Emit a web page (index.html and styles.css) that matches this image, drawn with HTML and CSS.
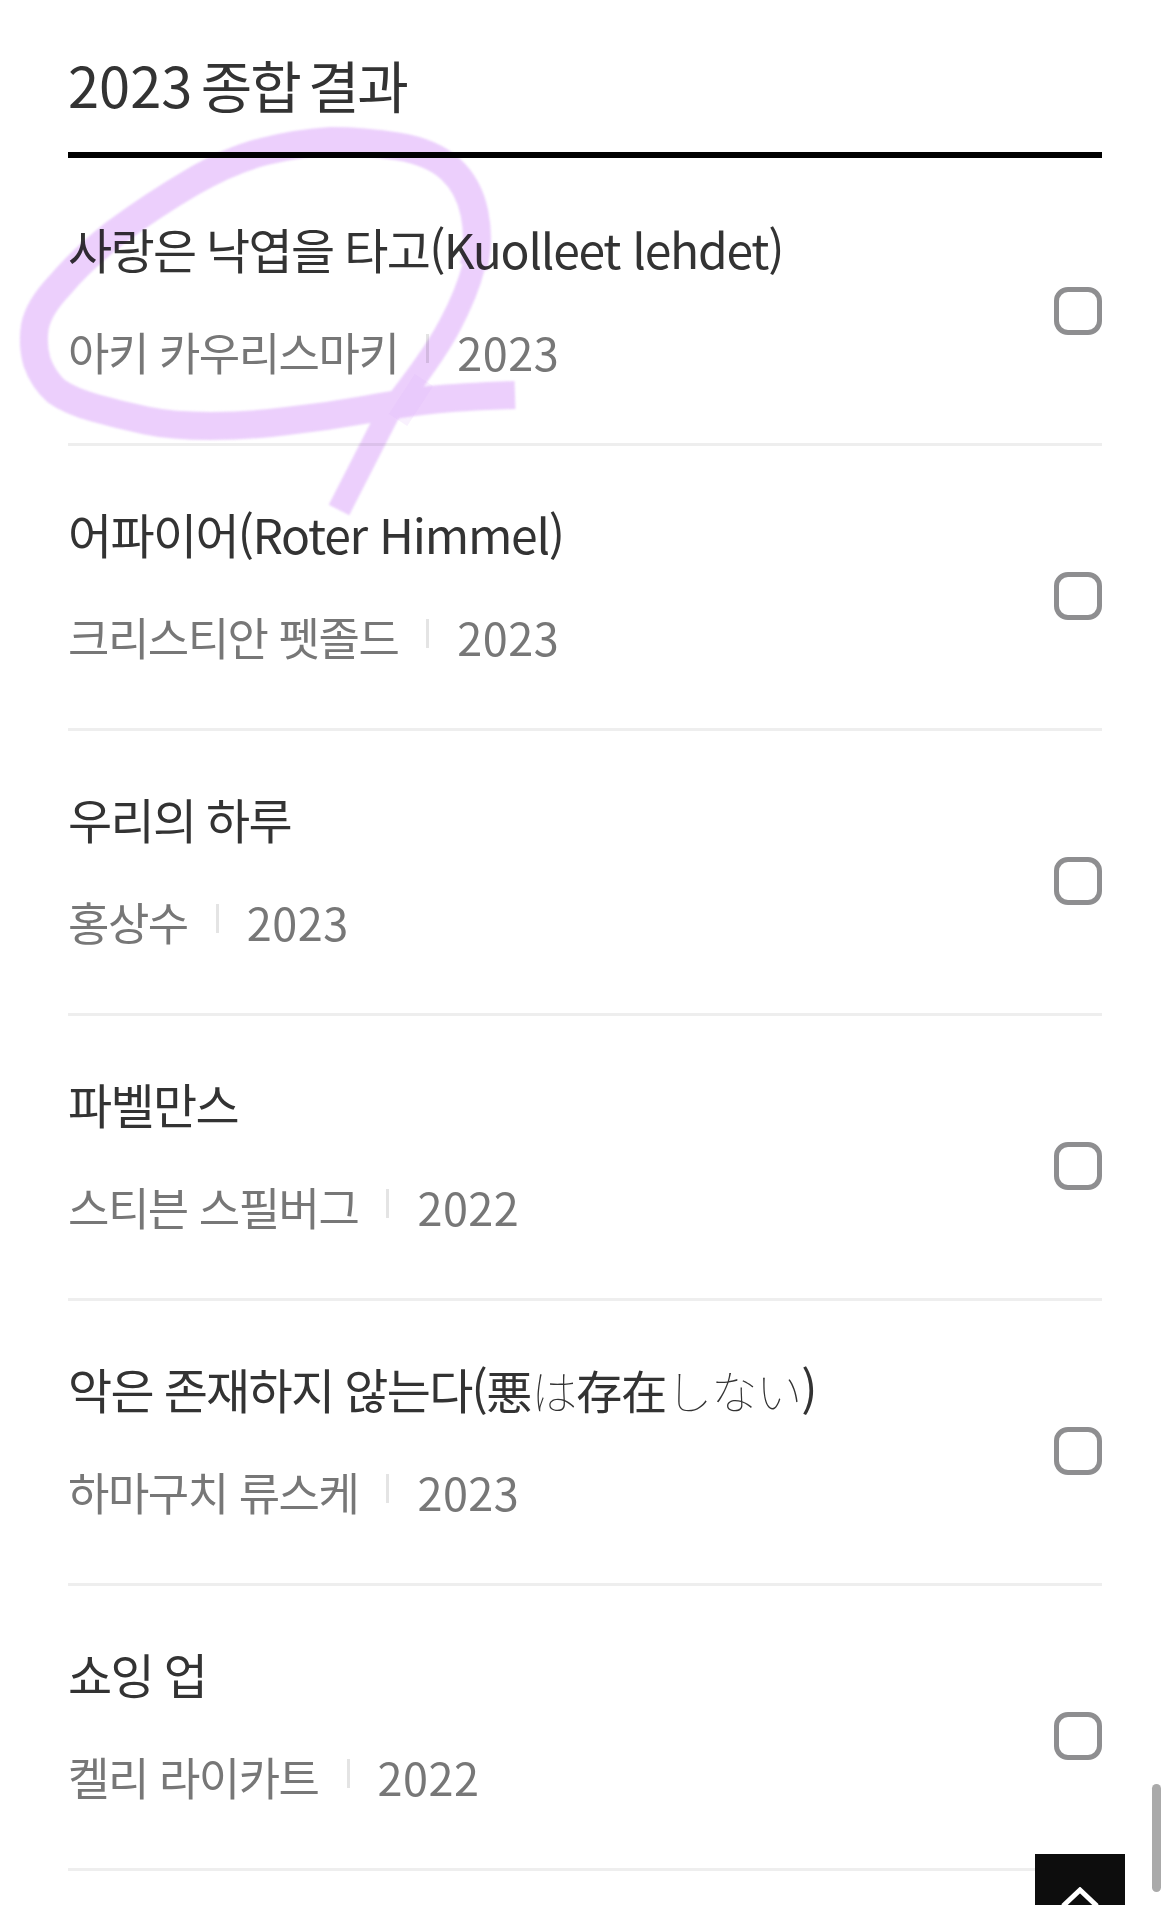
FILE: index.html
```html
<!DOCTYPE html>
<html lang="ko">

<head>
    <title>2023 종합 결과</title>
    <link rel="stylesheet" href="styles.css">
</head>

<body>
    <div class="page">
        <h2 class="heading"><span class="heading-year">2023</span> 종합 결과</h2>
        <ul class="list">
            <li class="row">
                <div>
                    <div class="title">사랑은 낙엽을 타고(<span class="latin">Kuolleet lehdet)</span></div>
                    <div class="meta"><span>아키 카우리스마키</span><i class="bar"></i><span class="year">2023</span></div>
                </div>
                <span class="check"></span>
            </li>
            <li class="row">
                <div>
                    <div class="title">어파이어(<span class="latin">Roter Himmel)</span></div>
                    <div class="meta"><span>크리스티안 펫졸드</span><i class="bar"></i><span class="year">2023</span></div>
                </div>
                <span class="check"></span>
            </li>
            <li class="row">
                <div>
                    <div class="title">우리의 하루</div>
                    <div class="meta"><span>홍상수</span><i class="bar"></i><span class="year">2023</span></div>
                </div>
                <span class="check"></span>
            </li>
            <li class="row">
                <div>
                    <div class="title">파벨만스</div>
                    <div class="meta"><span>스티븐 스필버그</span><i class="bar"></i><span class="year">2022</span></div>
                </div>
                <span class="check"></span>
            </li>
            <li class="row">
                <div>
                    <div class="title">악은 존재하지 않는다(<span class="jp">悪<span class="kana">は</span>存在<span class="kana">しない</span></span>)</div>
                    <div class="meta"><span>하마구치 류스케</span><i class="bar"></i><span class="year">2023</span></div>
                </div>
                <span class="check"></span>
            </li>
            <li class="row">
                <div>
                    <div class="title">쇼잉 업</div>
                    <div class="meta"><span>켈리 라이카트</span><i class="bar"></i><span class="year">2022</span></div>
                </div>
                <span class="check"></span>
            </li>
        </ul>
    </div>

    <!-- highlighter scribble on top of the first row -->
    <svg class="scribble" width="1170" height="1905" viewBox="0 0 1170 1905">
        <g class="scribble-ink">
            <path class="tail" d="M339 510 L388 414 Q432 359 449.5 326 Q467 293 473.5 267" />
            <path d="M473.5 267 Q480 241 474.5 213.5 Q469 186 450.5 169 Q432 152 398 146.5 Q364 141 331 141 Q298 143 264 151.5 Q230 160 191.5 182.5 Q153 205 115 233 Q80 261 60 285 Q39 307 35 326 Q32 345 37 362 Q43 379 56 391 Q70 401 95 408 Q120 415 146 420.5 Q172 426 210.5 426 Q249 426 287 421 Q325 417 363.5 410 Q402 403 430.5 400 Q459 397 515 395" />
        </g>
        <path class="cross" d="M398 420 L424 380" />
    </svg>

    <div class="scrollbar"></div>
    <button class="top-btn">
        <svg width="40" height="20" viewBox="0 0 40 20">
            <path d="M3 19 L20 3 L37 19" />
        </svg>
    </button>
</body>

</html>
```

FILE: styles.css
```css
html,
body {
    margin: 0;
    height: 1905px;
    overflow: hidden;
    background: #fff;
}

body {
    position: relative;
    font-family: "Noto Sans CJK KR", "Noto Sans", sans-serif;
}

.page {
    padding: 0 68px;
}

.heading {
    margin: 0;
    height: 158px;
    box-sizing: border-box;
    padding-top: 49px;
    font-size: 56px;
    line-height: 70px;
    font-weight: 400;
    letter-spacing: -2.2px;
    word-spacing: -5px;
    color: #333;
    border-bottom: 6px solid #000;
}

.heading-year {
    letter-spacing: 0;
}

.list {
    list-style-type: none;
    margin: 0;
    padding: 0;
}

.row {
    display: flex;
    justify-content: space-between;
    align-items: center;
    padding: 55px 0 59px;
    border-bottom: 3px solid #eee;
}

.row:first-child {
    padding: 58px 0 59px;
}

.title {
    font-size: 48px;
    line-height: 64px;
    letter-spacing: -1.7px;
    word-spacing: -1px;
    color: #333;
    margin-bottom: 40px;
}

.latin {
    letter-spacing: -1.25px;
    word-spacing: 0;
}

.jp {
    font-family: "Noto Sans CJK JP", sans-serif;
    font-size: 46px;
    line-height: 1;
    letter-spacing: -1px;
}

.kana {
    font-weight: 100;
}

.meta {
    display: flex;
    align-items: center;
    font-size: 45px;
    line-height: 64px;
    letter-spacing: -1.5px;
    color: #777;
}

.year {
    letter-spacing: 0.5px;
}

.bar {
    width: 3px;
    height: 29px;
    margin: -8px 28px 0;
    background: #e4e4e4;
}

.check {
    width: 48px;
    height: 48px;
    box-sizing: border-box;
    margin-top: 22px;
    border: 5px solid #8e8e90;
    border-radius: 14px;
}

.scribble {
    position: absolute;
    left: 0;
    top: 0;
    pointer-events: none;
    mix-blend-mode: multiply;
}

.scribble-ink {
    opacity: 0.6;
    filter: blur(0.8px);
}

.scribble-ink path {
    fill: none;
    stroke: #dfb0fa;
    stroke-width: 28;
}

.scribble-ink .tail {
    stroke-width: 23;
}

.scribble .cross {
    fill: none;
    stroke: #dfb0fa;
    stroke-width: 22;
    opacity: 0.18;
}

.scrollbar {
    position: absolute;
    left: 1152px;
    top: 1784px;
    width: 9px;
    height: 108px;
    border-radius: 5px;
    background: #aaa;
}

.top-btn {
    position: absolute;
    left: 1035px;
    top: 1854px;
    width: 90px;
    height: 90px;
    padding: 33px 0 0;
    border: none;
    background: #0d0d0d;
    display: flex;
    justify-content: center;
    align-items: flex-start;
}

.top-btn path {
    fill: none;
    stroke: #fff;
    stroke-width: 5;
}
```
